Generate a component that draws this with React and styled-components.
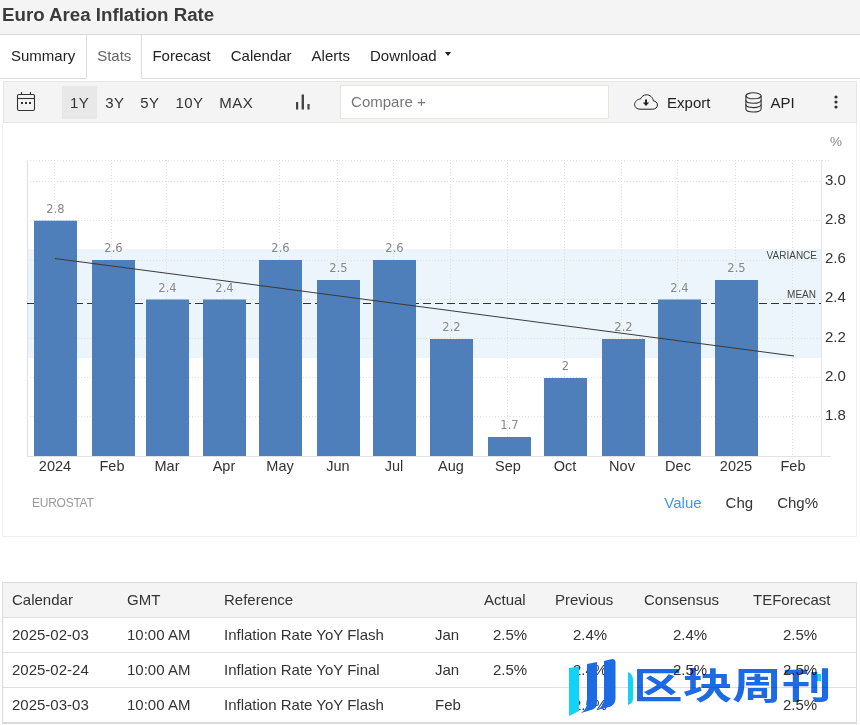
import React from "react";
import styled, { createGlobalStyle } from "styled-components";

const GlobalStyle = createGlobalStyle`
  html, body {
    margin: 0;
    padding: 0;
    background: #fff;
    overflow: hidden;
  }
  body {
    font-family: "Liberation Sans", Arial, sans-serif;
    color: #333;
  }
`;

const Page = styled.div`
  width: 860px;
  height: 725px;
  position: relative;
  overflow: hidden;
`;

const TitleBar = styled.div`
  height: 34px;
  background: #f4f4f4;
  border-bottom: 1px solid #d8d8d8;
  padding-left: 2px;
  display: flex;
  align-items: center;
`;

const Title = styled.h1`
  margin: 0 0 5px;
  font-size: 18.7px;
  font-weight: 700;
  color: #3b3b3b;
`;

const Nav = styled.nav`
  display: flex;
  align-items: flex-start;
  height: 43px;
  border-bottom: 1px solid #dcdcdc;
`;

const Tab = styled.div`
  display: flex;
  align-items: center;
  gap: 8px;
  height: ${(p) => (p.$active ? "44px" : "43px")};
  box-sizing: border-box;
  padding: 0 ${(p) => (p.$first ? "11px" : "10px")} ${(p) => (p.$active ? "4px" : "3px")};
  font-size: 15px;
  color: ${(p) => (p.$active ? "#666" : "#222")};
  background: #fff;
  border-left: ${(p) => (p.$active ? "1px solid #dcdcdc" : "none")};
  border-right: ${(p) => (p.$active ? "1px solid #dcdcdc" : "none")};
`;

const Caret = styled.span`
  width: 0;
  height: 0;
  border-left: 3.5px solid transparent;
  border-right: 3.5px solid transparent;
  border-top: 4px solid #222;
  margin-bottom: 3px;
`;

const Toolbar = styled.div`
  margin: 2px 3px 0;
  height: 40px;
  background: #f4f4f4;
  border: 1px solid #e6e6e6;
  display: flex;
  align-items: center;
  padding-left: 12px;
`;

const IconSlot = styled.span`
  display: flex;
  align-items: center;
  color: #333;
`;

const RangeGroup = styled.div`
  display: flex;
  margin-left: 26px;
  margin-right: 35px;
`;

const RangeButton = styled.div`
  height: 33px;
  padding: 0 8px;
  display: flex;
  align-items: center;
  font-size: 15px;
  letter-spacing: 0.4px;
  color: #333;
  background: ${(p) => (p.$active ? "#e8e8e8" : "transparent")};
`;

const CompareBox = styled.div`
  width: 269px;
  height: 34px;
  box-sizing: border-box;
  margin-left: 30px;
  background: #fff;
  border: 1px solid #e6e6df;
  display: flex;
  align-items: center;
  padding: 0 0 1px 10px;
  font-size: 15px;
  color: #777;
`;

const ToolAction = styled.div`
  display: flex;
  align-items: center;
  gap: ${(p) => p.$gap}px;
  margin-left: ${(p) => p.$left}px;
  font-size: 15px;
  color: #222;
`;

const ChartPanel = styled.section`
  margin: 0 3px 0 2px;
  height: 414px;
  box-sizing: border-box;
  border: 1px solid #f0f0f0;
  border-top: none;
  display: flex;
  flex-direction: column;
`;

const ChartSvg = styled.svg`
  display: block;
  width: 853px;
  height: 358px;
`;

const ChartFooter = styled.div`
  display: flex;
  align-items: center;
  justify-content: space-between;
  padding: 13px 38px 0 29px;
`;

const Source = styled.span`
  font-size: 12px;
  letter-spacing: -0.25px;
  color: #999;
`;

const Modes = styled.div`
  display: flex;
  gap: 24px;
`;

const Mode = styled.span`
  font-size: 15px;
  color: ${(p) => (p.$active ? "#3d98ef" : "#333")};
`;

const TableBox = styled.section`
  position: relative;
  margin: 45px 3px 0 2px;
  border: 1px solid #dadada;
  border-bottom: 2px solid #dadada;
  font-size: 15px;
  color: #333;
`;

const Row = styled.div`
  display: grid;
  grid-template-columns: 115px 97px 211px 49px 71px 89px 109px 1fr;
  align-items: center;
  height: 34px;
  background: ${(p) => (p.$head ? "#f4f4f4" : "#fff")};
  & + & {
    border-top: 1px solid #dfdfe3;
  }
`;

const Cell = styled.div`
  padding-left: ${(p) => p.$indent || 9}px;
  margin-bottom: 2px;
  white-space: nowrap;
`;

const Watermark = styled.div`
  position: absolute;
  left: 562px;
  top: 69px;
  width: 272px;
  height: 64px;
  display: flex;
  pointer-events: none;
`;

const WatermarkText = styled.span`
  position: absolute;
  left: 68px;
  top: 1px;
  font-family: "Noto Sans CJK SC", sans-serif;
  font-weight: 700;
  font-size: 36px;
  line-height: 60px;
  color: #1c6ae4;
  transform: scaleX(1.38);
  transform-origin: left center;
  white-space: nowrap;
  mix-blend-mode: multiply;
`;

// chart geometry, in page pixels
const bars = [
  { x: 34, v: "2.8", top: 220.7 },
  { x: 92, v: "2.6", top: 260 },
  { x: 146, v: "2.4", top: 299.5 },
  { x: 203, v: "2.4", top: 299.5 },
  { x: 259, v: "2.6", top: 260 },
  { x: 317, v: "2.5", top: 280 },
  { x: 373, v: "2.6", top: 260 },
  { x: 430, v: "2.2", top: 339 },
  { x: 488, v: "1.7", top: 437 },
  { x: 544, v: "2", top: 378 },
  { x: 602, v: "2.2", top: 339 },
  { x: 658, v: "2.4", top: 299.5 },
  { x: 715, v: "2.5", top: 280 },
];

const xLabels = [
  ["2024", 55],
  ["Feb", 112],
  ["Mar", 167],
  ["Apr", 224],
  ["May", 280],
  ["Jun", 338],
  ["Jul", 394],
  ["Aug", 451],
  ["Sep", 508],
  ["Oct", 565],
  ["Nov", 622],
  ["Dec", 678],
  ["2025", 736],
  ["Feb", 793],
];

const yLabels = [
  ["3.0", 181.7],
  ["2.8", 220.9],
  ["2.6", 260.1],
  ["2.4", 299.3],
  ["2.2", 338.5],
  ["2.0", 377.7],
  ["1.8", 416.9],
];

const rows = [
  ["2025-02-03", "10:00 AM", "Inflation Rate YoY Flash", "Jan", "2.5%", "2.4%", "2.4%", "2.5%"],
  ["2025-02-24", "10:00 AM", "Inflation Rate YoY Final", "Jan", "2.5%", "2.4%", "2.5%", "2.5%"],
  ["2025-03-03", "10:00 AM", "Inflation Rate YoY Flash", "Feb", "", "2.5%", "", "2.5%"],
];

const Chart = () => (
  <ChartSvg viewBox="3 123 853 358" fontFamily="Liberation Sans, Arial, sans-serif">
    <rect x="27" y="249" width="794" height="109" fill="#ecf5fb" />
    <g stroke="#dedede" strokeWidth="1" strokeDasharray="1 2">
      <line x1="27" x2="830" y1="160.5" y2="160.5" />
      {yLabels.map(([label, y]) => (
        <line key={label} x1="27" x2="821" y1={Math.floor(y) + 0.5} y2={Math.floor(y) + 0.5} />
      ))}
      {xLabels.map(([label, x]) => (
        <line key={label + x} x1={x - 0.5} x2={x - 0.5} y1="160" y2="456" />
      ))}
    </g>
    <line x1="27.5" x2="27.5" y1="160" y2="456" stroke="#e0e0e0" />
    <line x1="821.5" x2="821.5" y1="160" y2="456" stroke="#e4e4e4" />
    <line x1="27" x2="821" y1="303.5" y2="303.5" stroke="#333" strokeDasharray="8 4" />
    {bars.map((b) => (
      <g key={b.x}>
        <rect x={b.x} y={b.top} width="43" height={456 - b.top} fill="#4f7fba" />
        <text
          x={b.x + 21.5}
          y={b.top - 8}
          textAnchor="middle"
          fontFamily="DejaVu Sans, sans-serif"
          fontSize="11.5"
          fill="#888"
        >
          {b.v}
        </text>
      </g>
    ))}
    <line x1="55" y1="258.5" x2="794" y2="356" stroke="#3a3a3a" strokeWidth="1.1" />
    <line x1="27" x2="831" y1="456.5" y2="456.5" stroke="#e2e2e2" />
    {xLabels.map(([label, x]) => (
      <text key={label + x} x={x} y="471" textAnchor="middle" fontSize="14.5" fill="#333">
        {label}
      </text>
    ))}
    {yLabels.map(([label, y]) => (
      <text key={label} x="825" y={y + 3} fontSize="15" fill="#333">
        {label}
      </text>
    ))}
    <text x="830" y="146" fontSize="13.5" fill="#888">%</text>
    <text x="817" y="259" textAnchor="end" fontSize="10" fill="#444">VARIANCE</text>
    <text x="816" y="298" textAnchor="end" fontSize="10" fill="#444">MEAN</text>
  </ChartSvg>
);

const CalendarIcon = () => (
  <svg width="20" height="22" viewBox="0 0 20 22" fill="none" stroke="#333" strokeWidth="1.1">
    <rect x="1.5" y="3.5" width="17" height="16" rx="1.5" />
    <line x1="1.5" y1="7.5" x2="18.5" y2="7.5" />
    <line x1="5.5" y1="1" x2="5.5" y2="3.5" />
    <line x1="14.5" y1="1" x2="14.5" y2="3.5" />
    <g fill="#333" stroke="none">
      <rect x="5" y="11" width="2" height="2" />
      <rect x="9" y="11" width="2" height="2" />
      <rect x="13" y="11" width="2" height="2" />
    </g>
  </svg>
);

const BarsIcon = () => (
  <svg width="14" height="16" viewBox="0 0 14 16" fill="#444">
    <rect x="0" y="8" width="2.2" height="7.500" />
    <rect x="5.600" y="0.500" width="2.400" height="15" />
    <rect x="11.400" y="10" width="2.200" height="5.500" />
  </svg>
);

const CloudIcon = () => (
  <svg width="24" height="16" viewBox="0 0 24 16" fill="none" stroke="#222" strokeWidth="1">
    <path d="M6 15.2 H18.500 C21.500 15.2 23.400 13.400 23.400 11 C23.400 8.700 21.600 7 19.400 6.900 C18.800 3.200 15.900 0.800 12.600 0.800 C9.800 0.800 7.600 2.400 6.600 4.900 C3.400 5.100 0.600 7.600 0.600 10.600 C0.600 13.200 3 15.200 6 15.200 Z" />
    <path d="M12 5.500 V10" strokeWidth="2" />
    <path d="M8.800 8.600 H15.200 L12 12 Z" fill="#222" stroke="none" />
  </svg>
);

const DatabaseIcon = () => (
  <svg width="17" height="21" viewBox="0 0 17 21" fill="none" stroke="#333" strokeWidth="1.1">
    <ellipse cx="8.500" cy="3.800" rx="7.600" ry="3" />
    <path d="M0.900 3.800 V17 C0.900 18.800 4.300 20 8.500 20 C12.700 20 16.100 18.800 16.100 17 V3.800" />
    <path d="M0.900 8.200 C0.900 10 4.300 11.200 8.500 11.200 C12.700 11.200 16.100 10 16.100 8.200" />
    <path d="M0.900 12.600 C0.900 14.400 4.300 15.600 8.500 15.600 C12.700 15.600 16.100 14.400 16.100 12.600" />
  </svg>
);

const DotsIcon = () => (
  <svg width="4" height="14" viewBox="0 0 4 14" fill="#333">
    <circle cx="2" cy="2" r="1.6" />
    <circle cx="2" cy="7" r="1.6" />
    <circle cx="2" cy="12" r="1.6" />
  </svg>
);

const LogoMark = () => (
  <svg width="272" height="64" viewBox="565 652 272 64">
    <path d="M569 668 L579 666.500 V711 L569 716 Z" fill="#10d4f5" />
    <path d="M587 664 L597 662 V702 C597 707 595 709 591 710 L581 713 C585 710 587 707 587 702 Z" fill="#1c6ae4" />
    <path d="M604 661 L612 659 C614 659 615.500 660 615.500 662 V698 C615.500 703 613 706 609 707 L597 710 C602 707 604 703 604 698 Z" fill="#1c6ae4" />
    <path d="M628 672 C631 673 633 676 633 680 V698 C633 702 631 704 628 705 Z" fill="#10d4f5" />
    <rect x="817" y="674" width="4" height="7" fill="#10d4f5" />
  </svg>
);

const App = () => (
  <Page>
    <GlobalStyle />
    <TitleBar>
      <Title>Euro Area Inflation Rate</Title>
    </TitleBar>
    <Nav>
      <Tab $first>Summary</Tab>
      <Tab $active>Stats</Tab>
      <Tab>Forecast</Tab>
      <Tab>Calendar</Tab>
      <Tab>Alerts</Tab>
      <Tab>
        Download <Caret />
      </Tab>
    </Nav>
    <Toolbar>
      <IconSlot>
        <CalendarIcon />
      </IconSlot>
      <RangeGroup>
        <RangeButton $active>1Y</RangeButton>
        <RangeButton>3Y</RangeButton>
        <RangeButton>5Y</RangeButton>
        <RangeButton>10Y</RangeButton>
        <RangeButton>MAX</RangeButton>
      </RangeGroup>
      <IconSlot>
        <BarsIcon />
      </IconSlot>
      <CompareBox>Compare +</CompareBox>
      <ToolAction $left={25} $gap={9}>
        <CloudIcon />
        Export
      </ToolAction>
      <ToolAction $left={35} $gap={8}>
        <DatabaseIcon />
        API
      </ToolAction>
      <ToolAction $left={39} $gap={0}>
        <DotsIcon />
      </ToolAction>
    </Toolbar>
    <ChartPanel>
      <Chart />
      <ChartFooter>
        <Source>EUROSTAT</Source>
        <Modes>
          <Mode $active>Value</Mode>
          <Mode>Chg</Mode>
          <Mode>Chg%</Mode>
        </Modes>
      </ChartFooter>
    </ChartPanel>
    <TableBox>
      <Row $head>
        <Cell>Calendar</Cell>
        <Cell>GMT</Cell>
        <Cell>Reference</Cell>
        <Cell />
        <Cell>Actual</Cell>
        <Cell>Previous</Cell>
        <Cell>Consensus</Cell>
        <Cell>TEForecast</Cell>
      </Row>
      {rows.map((r) => (
        <Row key={r[0]}>
          <Cell>{r[0]}</Cell>
          <Cell>{r[1]}</Cell>
          <Cell>{r[2]}</Cell>
          <Cell>{r[3]}</Cell>
          <Cell $indent={18}>{r[4]}</Cell>
          <Cell $indent={27}>{r[5]}</Cell>
          <Cell $indent={38}>{r[6]}</Cell>
          <Cell $indent={39}>{r[7]}</Cell>
        </Row>
      ))}
      <Watermark>
        <LogoMark />
        <WatermarkText>区块周刊</WatermarkText>
      </Watermark>
    </TableBox>
  </Page>
);

export default App;
